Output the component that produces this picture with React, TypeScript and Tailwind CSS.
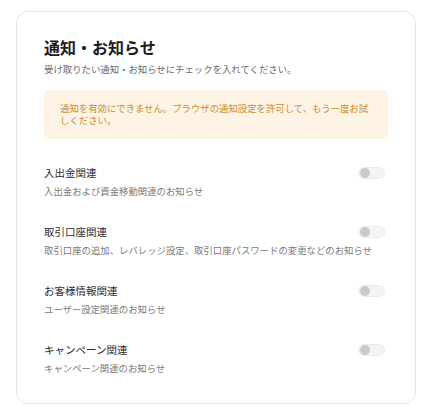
const items = [
  { title: '入出金関連', desc: '入出金および資金移動関連のお知らせ' },
  { title: '取引口座関連', desc: '取引口座の追加、レバレッジ設定、取引口座パスワードの変更などのお知らせ' },
  { title: 'お客様情報関連', desc: 'ユーザー設定関連のお知らせ' },
  { title: 'キャンペーン関連', desc: 'キャンペーン関連のお知らせ' },
];

function Toggle() {
  return (
    <span className="mr-[3px] flex h-[12px] w-[27px] flex-shrink-0 items-center rounded-full border border-[#ebebeb] bg-[#f4f4f4] px-[1px]">
      <span className="h-[10px] w-[10px] rounded-full bg-[#c9c9c9]" />
    </span>
  );
}

export default function App() {
  return (
    <div
      className="h-[411px] w-[430px] bg-white pt-[11px] pl-[16px]"
      style={{ fontFamily: '"Noto Sans CJK JP", "Noto Sans", sans-serif' }}
    >
      <div className="w-[400px] rounded-[12px] border border-[#e6e6e6] bg-white px-[27px] pt-[25px] pb-[28px]">
        <h1 className="text-[16px] font-bold leading-[20px] text-[#1c1c1c]">通知・お知らせ</h1>
        <p className="mt-[5px] text-[9.4px] leading-[14px] text-[#6b6b6b]">
          受け取りたい通知・お知らせにチェックを入れてください。
        </p>
        <div className="mt-[14px] rounded-[4px] bg-[#fdf4e6] py-[13px] pr-[16px] pl-[16px] text-[9.4px] leading-[11.5px] text-[#c98f2e]">
          通知を有効にできません。ブラウザの通知設定を許可して、もう一度お試しください。
        </div>
        <div className="mt-[26px] flex flex-col gap-[26px]">
          {items.map((item) => (
            <div key={item.title} className="flex flex-col">
              <div className="flex items-center justify-between">
                <span className="text-[10.5px] leading-[16px] text-[#2e2e2e]">{item.title}</span>
                <Toggle />
              </div>
              <span className="mt-[3px] text-[9.4px] leading-[14px] text-[#7a7a7a]">{item.desc}</span>
            </div>
          ))}
        </div>
      </div>
    </div>
  );
}
